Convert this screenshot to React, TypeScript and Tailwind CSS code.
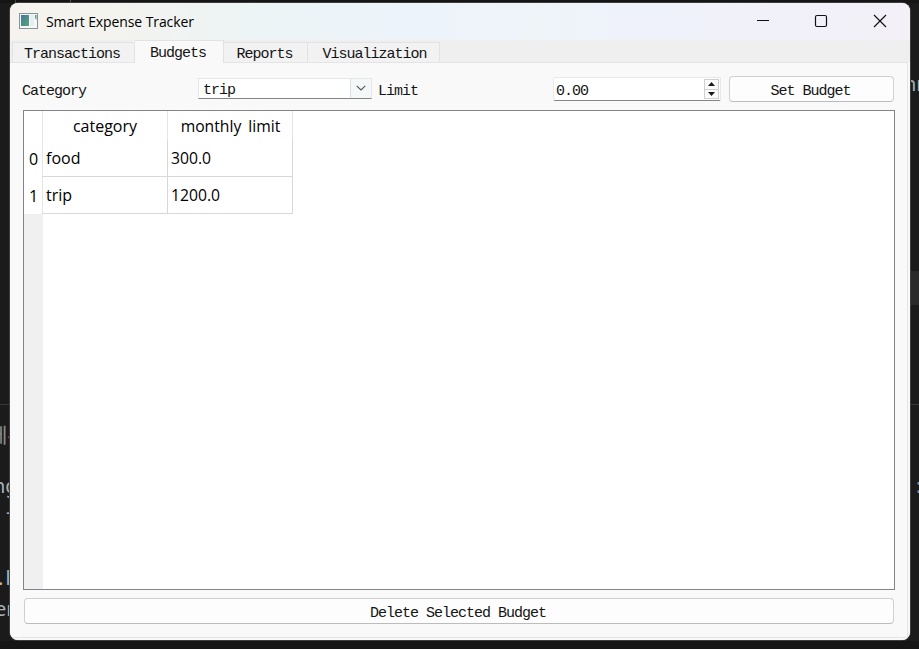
import React from "react";

const mono =
  "font-['Liberation_Mono',monospace] text-[15px] leading-4 tracking-[-1px] whitespace-pre text-[#141414]";
const sans = "font-['Open_Sans','Noto_Sans',sans-serif] text-black whitespace-pre";

function Backdrop() {
  const code = "absolute font-['Noto_Sans','Noto_Sans_CJK_KR',sans-serif] text-[20px] leading-6 whitespace-pre";
  return (
    <div className="absolute inset-0 overflow-hidden bg-[#1b1b1b]">
      <div className="absolute left-0 top-0 h-[3px] w-full bg-[#151515]" />
      <div className="absolute left-[15px] top-0 h-[3px] w-px bg-[#46443c]" />
      <div className="absolute left-[70px] top-0 h-[3px] w-px bg-[#5c563f]" />
      <div className="absolute left-0 top-[404px] h-px w-full bg-[#383838]" />
      <div className="absolute right-0 top-[271px] h-[34px] w-[9px] bg-[#2a2a2a]" />
      <div className="absolute bottom-0 left-0 h-2 w-full bg-[#151515]" />
      <span className={`${code} left-[-11px] top-[424px] text-[#8d8d8d]`}>에-</span>
      <span className={`${code} left-[-7px] top-[474px] text-[#a9b0b6]`}>ng</span>
      <span className={`${code} left-[6px] top-[500px] text-[#a9b0b6]`}>-</span>
      <span className={`${code} left-[-2px] top-[566px] text-[#d7b48b]`}>.<span className="ml-0.5 text-[#9fb8c9]">l</span></span>
      <span className={`${code} left-[-5px] top-[597px] text-[#a9b0b6]`}>er</span>
      <span className={`${code} left-[904px] top-[72px] text-[#a6adb0]`}>nn</span>
      <span className={`${code} left-[916px] top-[474px] text-[#7f95a3]`}>:</span>
    </div>
  );
}

function TitleBar() {
  return (
    <header className="flex h-[37px] shrink-0 items-center bg-[linear-gradient(90deg,#f6f3ee_0%,#f3f3ef_12%,#ecf4f5_27%,#edf3fb_45%,#eef4f8_58%,#eff2fb_68%,#f3f0f7_100%)] pl-[9px]">
      <svg width="19" height="16" viewBox="0 0 19 16" className="mb-0.5 shrink-0">
        <defs>
          <linearGradient id="pane" x1="0" y1="0" x2="1" y2="1">
            <stop offset="0" stopColor="#4675a4" />
            <stop offset="1" stopColor="#55a672" />
          </linearGradient>
        </defs>
        <rect x="0.5" y="0.5" width="18" height="15" fill="#f4f7fa" stroke="#8b9299" />
        <rect x="2" y="2" width="8" height="11" fill="url(#pane)" />
        <rect x="11" y="2" width="4" height="11" fill="#e7edf3" />
        <path d="M16 2h1.5v5l-1.5-2z" fill="#56a47b" />
      </svg>
      <span className={`${sans} ml-2 w-[148px] text-[14px] leading-5 tracking-[-0.1px]`}>Smart Expense Tracker</span>
      <svg className="mb-0.5 ml-auto mr-[23px] shrink-0" width="131" height="14" viewBox="0 0 131 14" fill="none" stroke="#111" strokeWidth="1.2">
        <path d="M1 6.5h12" />
        <rect x="59.5" y="1.5" width="11" height="11" rx="1.5" />
        <path d="M118 1l12 12M130 1l-12 12" />
      </svg>
    </header>
  );
}

function Tabs() {
  const idle = "flex h-5 items-center justify-center border-r border-t border-[#e2e2e2] bg-[#f2f2f2] pt-[5px]";
  return (
    <nav className="flex h-[22px] shrink-0 items-end bg-[#efefef] pl-[2px]">
      <div className={`${idle} w-[123px] border-l pr-[3px]`}><span className={mono}>Transactions</span></div>
      <div className="relative top-px flex h-[23px] w-[89px] items-center justify-center border-r border-t border-[#e2e2e2] bg-[#f9f9f9] pr-0.5 pt-1">
        <span className={mono}>Budgets</span>
      </div>
      <div className={`${idle} w-[84px] pr-0.5`}><span className={mono}>Reports</span></div>
      <div className={`${idle} w-[132px] pl-0.5`}><span className={mono}>Visualization</span></div>
    </nav>
  );
}

function Toolbar() {
  return (
    <div className="flex h-[26px] shrink-0 items-center">
      <span className={`${mono} w-[176px] pt-[5px]`}>Category</span>
      <div className="mb-0.5 flex h-[21px] w-[174px] items-center border border-[#e6e6e6] border-b-[#858585] bg-white pl-1">
        <span className={`${mono} flex-1 pt-[5px]`}>trip</span>
        <div className="flex h-full w-[21px] items-center justify-center border-l border-[#d9e0e6] bg-[#f5f8f9]">
          <svg width="10" height="6" viewBox="0 0 10 6" fill="none" stroke="#555" strokeWidth="1.1">
            <path d="M.7.8 5 5 9.3.8" />
          </svg>
        </div>
      </div>
      <span className={`${mono} ml-[6px] w-[175px] pt-[5px]`}>Limit</span>
      <div className="flex h-6 w-[168px] items-center rounded-[2px] border border-[#e8e8e8] border-b-[#858585] bg-white pl-[2px]">
        <span className={`${mono} flex-1 pt-[5px]`}>0.00</span>
        <div className="mr-px flex h-5 w-[15px] flex-col border border-[#cfcfcf] bg-[#fbfbfb]">
          <div className="flex flex-1 items-center justify-center border-b border-[#cfcfcf]">
            <svg width="7" height="4" viewBox="0 0 7 4"><path d="M3.5 0 7 4H0z" fill="#1a1a1a" /></svg>
          </div>
          <div className="flex flex-1 items-center justify-center">
            <svg width="7" height="4" viewBox="0 0 7 4"><path d="M3.5 4 7 0H0z" fill="#1a1a1a" /></svg>
          </div>
        </div>
      </div>
      <button className="ml-[8px] flex h-[26px] w-[165px] items-center justify-center rounded-[4px] border border-[#d0d0d0] border-b-[#bcbcbc] bg-[#fdfdfd] pr-0.5 pt-[5px]">
        <span className={mono}>Set Budget</span>
      </button>
    </div>
  );
}

const rows = [
  { category: "food", limit: "300.0" },
  { category: "trip", limit: "1200.0" },
];

function BudgetTable() {
  const text = `${sans} leading-5`;
  return (
    <div className="ml-px mt-2 flex h-[480px] w-[872px] shrink-0 border border-[#828488] bg-white">
      <div className="flex w-[18px] shrink-0 flex-col">
        <div className="h-[29px]" />
        {rows.map((r, i) => (
          <div key={r.category} className={`${text} flex h-[37px] items-center justify-center pl-px text-[16px]`}>{i}</div>
        ))}
        <div className="w-[19px] flex-1 bg-[#f0f0f0]" />
      </div>
      <div className="w-[251px] shrink-0">
        <div className="flex h-[29px]">
          <div className={`${text} flex w-[126px] items-center justify-center border-x border-[#e5e5e5] pt-px text-[16px]`}>category</div>
          <div className={`${text} flex w-[125px] items-center justify-center border-r border-[#e5e5e5] pl-px pt-px text-[15.7px] [word-spacing:3px]`}>monthly limit</div>
        </div>
        {rows.map((r) => (
          <div key={r.category} className="flex h-[37px] border-b border-[#d8d8d8]">
            <div className={`${text} flex w-[126px] items-center border-x border-l-[#e5e5e5] border-r-[#d8d8d8] pl-[3px] text-[16px]`}>{r.category}</div>
            <div className={`${text} flex w-[125px] items-center border-r border-[#d8d8d8] pl-[3px] text-[15.7px]`}>{r.limit}</div>
          </div>
        ))}
      </div>
    </div>
  );
}

export default function App() {
  return (
    <div className="relative h-[649px] w-[919px] overflow-hidden pl-[10px] pt-[3px]">
      <Backdrop />
      <main className="relative flex h-[637px] w-[900px] flex-col overflow-hidden rounded-[8px] bg-[#f5f5f5] ring-1 ring-[#3d3d3d]">
        <TitleBar />
        <Tabs />
        <div className="flex flex-1 flex-col bg-[#f9f9f9]">
          <section className="mb-[2px] mr-[2px] flex flex-1 flex-col border-b border-r border-t border-[#e4e4e4] pl-3 pt-[13px]">
            <Toolbar />
            <BudgetTable />
            <button className="ml-[2px] mt-2 flex h-[26px] w-[870px] shrink-0 items-center justify-center rounded-[4px] border border-[#d0d0d0] border-b-[#bcbcbc] bg-[#fdfdfd] pr-0.5 pt-[5px]">
              <span className={mono}>Delete Selected Budget</span>
            </button>
          </section>
        </div>
      </main>
    </div>
  );
}
